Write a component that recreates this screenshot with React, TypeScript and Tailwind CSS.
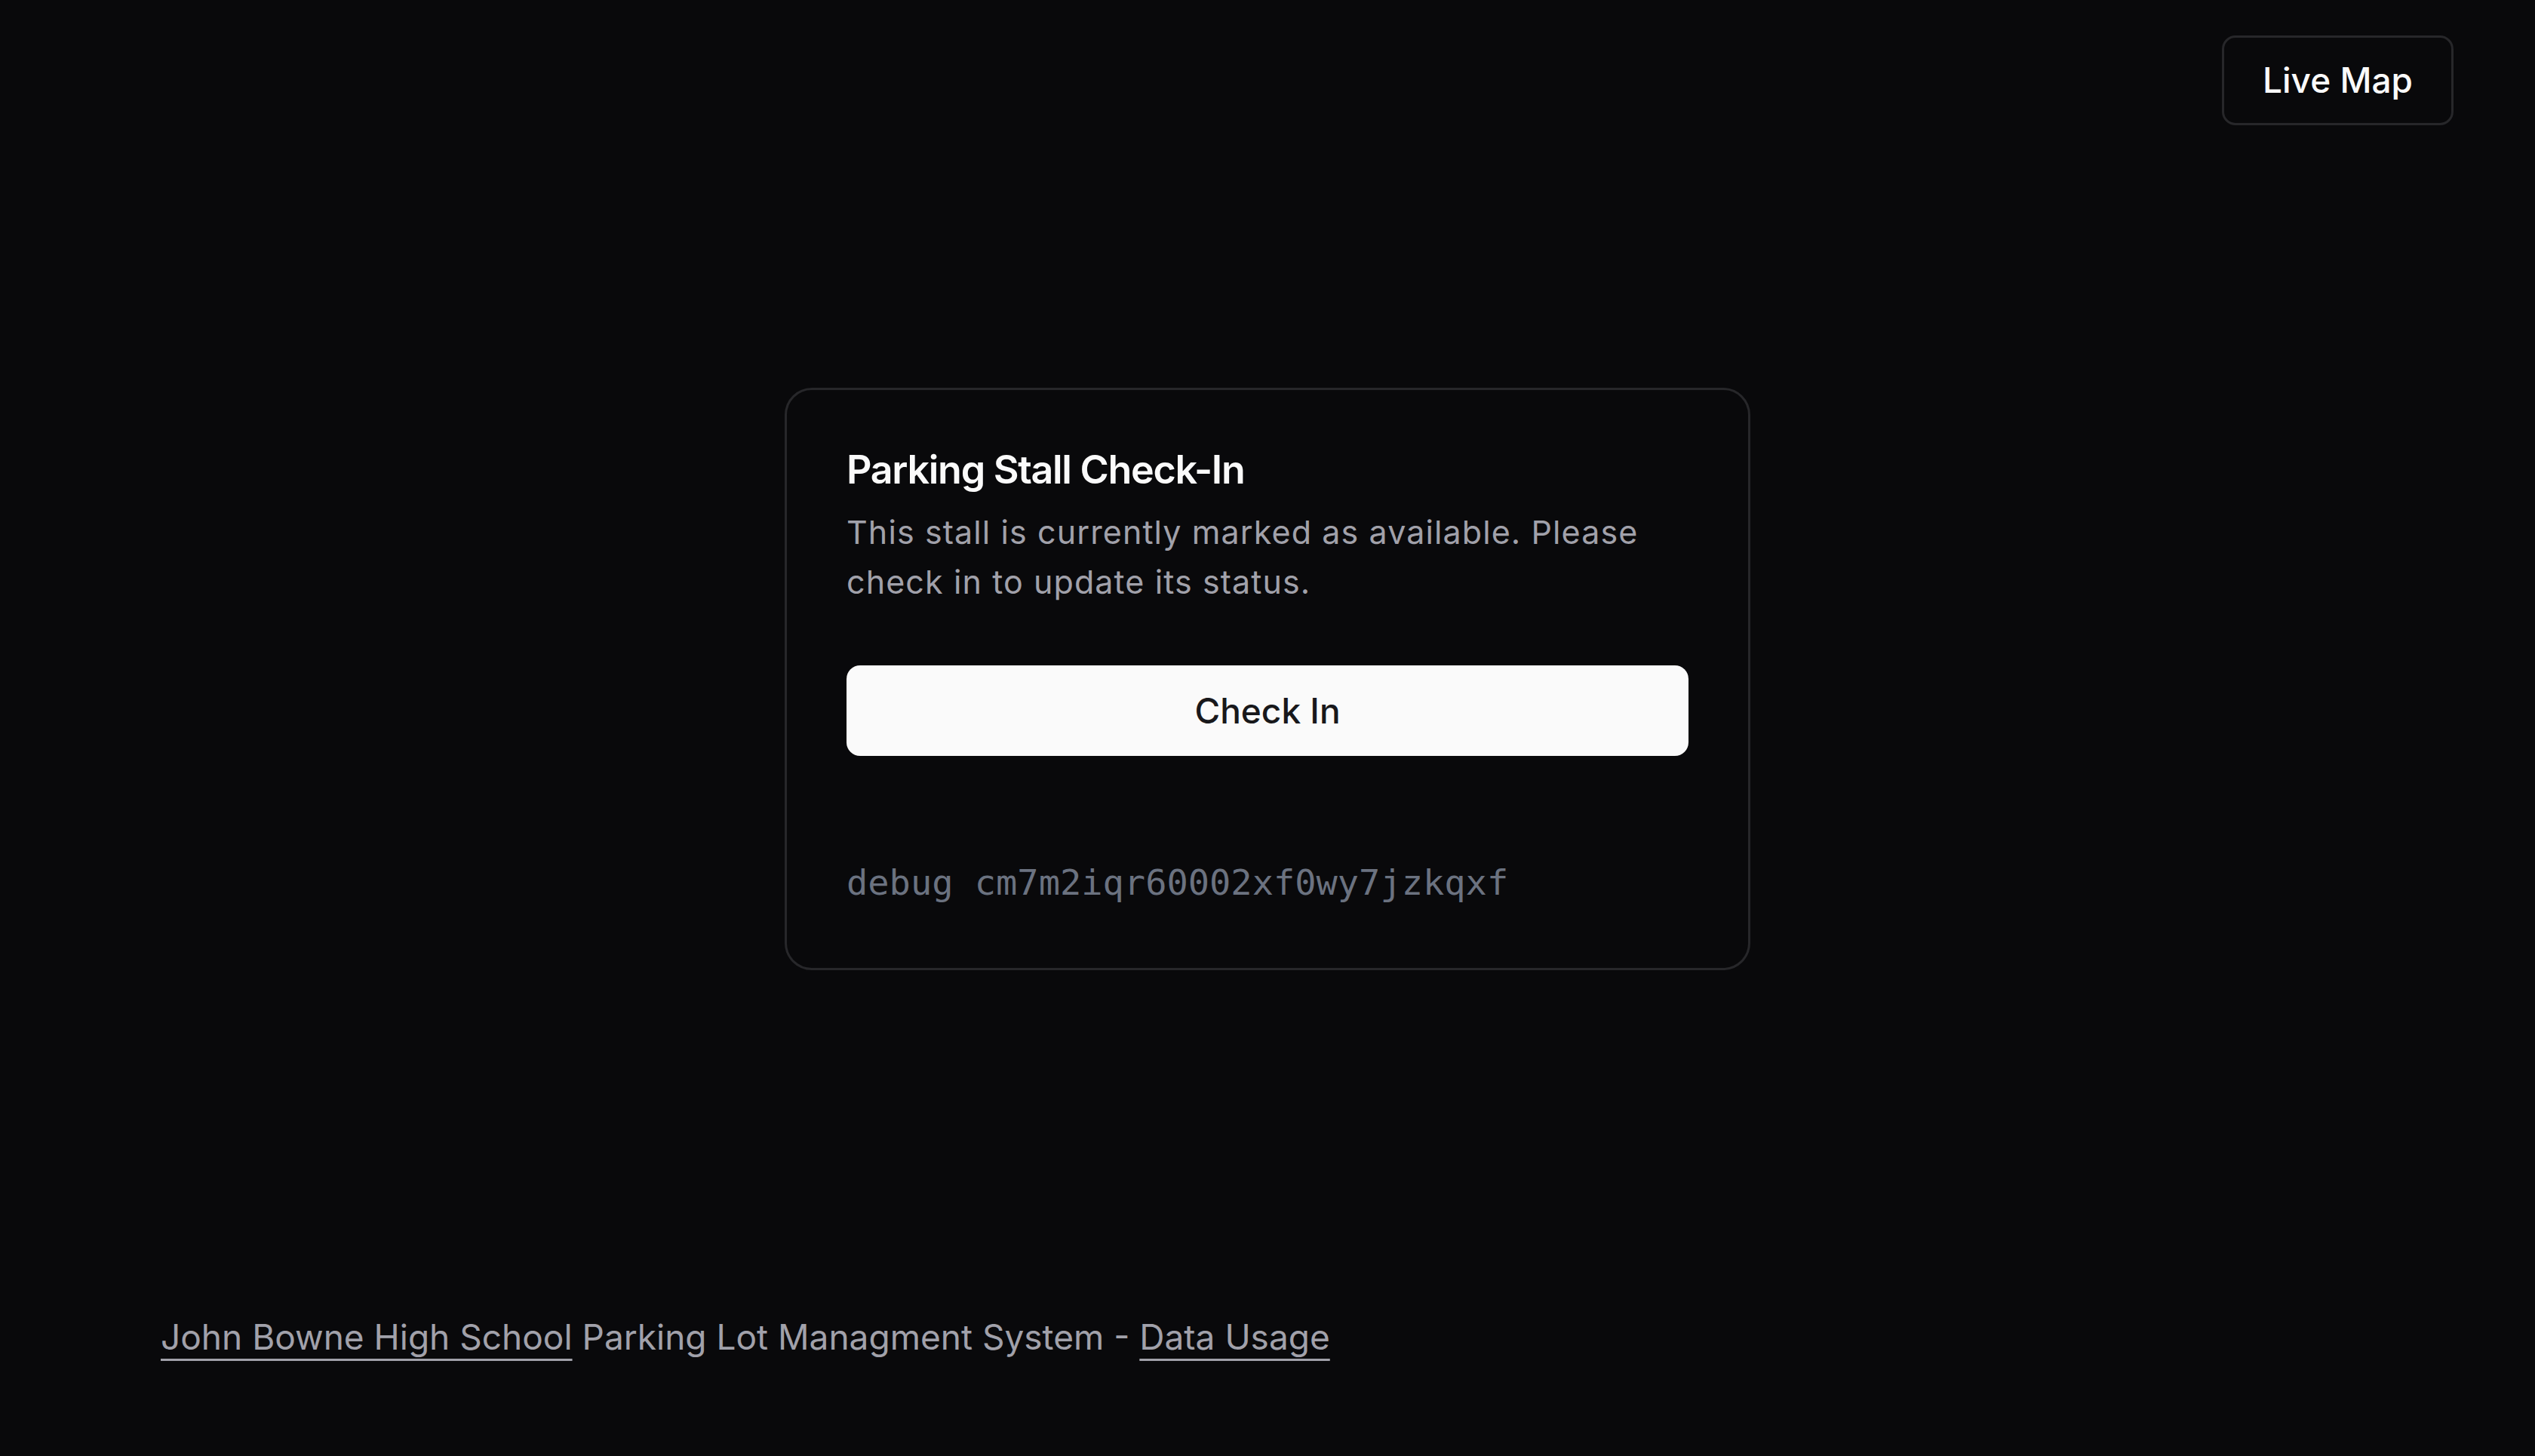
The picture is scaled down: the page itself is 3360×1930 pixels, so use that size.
import React from "react";

export default function App() {
    const stallId = "cm7m2iqr60002xf0wy7jzkqxf";

    return (
        <div
            className="min-h-[1930px] w-full flex flex-col bg-[#09090b] text-[#fafafa]"
            style={{ fontFamily: "Inter, 'Noto Sans', sans-serif" }}
        >
            {/* top bar */}
            <header className="flex justify-end pt-[47px] pr-[108px]">
                <button className="w-[307px] h-[119px] flex items-center justify-center rounded-[18px] border-[3px] border-[#27272a] bg-[#09090b] text-[46px] font-medium text-[#fafafa]">
                    Live Map
                </button>
            </header>

            {/* card */}
            <main className="flex justify-center pt-[348px]">
                <div className="w-[1280px] rounded-[36px] border-[3px] border-[#27272a] bg-[#09090b] px-[79px] pt-[80px] pb-[76px]">
                    <h1 className="text-[52px] leading-none font-semibold tracking-tight">
                        Parking Stall Check-In
                    </h1>
                    <p className="mt-[23px] text-[43px] leading-[66px] tracking-[1.1px] text-[#a1a1aa]">
                        This stall is currently marked as available. Please
                        <br />
                        check in to update its status.
                    </p>

                    <button className="mt-[78px] w-full h-[120px] flex items-center justify-center rounded-[18px] bg-[#fafafa] text-[46px] font-medium text-[#18181b]">
                        Check In
                    </button>

                    <div
                        className="mt-[130px] text-[47px] leading-[75px] text-[#6b7280]"
                        style={{ fontFamily: "'DejaVu Sans Mono', monospace" }}
                    >
                        debug {stallId}
                    </div>
                </div>
            </main>

            {/* footer */}
            <footer className="mt-auto pl-[213px] pb-[122px] text-[46px] leading-[72px] text-[#a1a1aa]">
                <a href="#" className="underline decoration-[3px] underline-offset-[12px]">
                    John Bowne High School
                </a>{" "}
                Parking Lot Managment System -{" "}
                <a href="#" className="underline decoration-[3px] underline-offset-[12px]">
                    Data Usage
                </a>
            </footer>
        </div>
    );
}
